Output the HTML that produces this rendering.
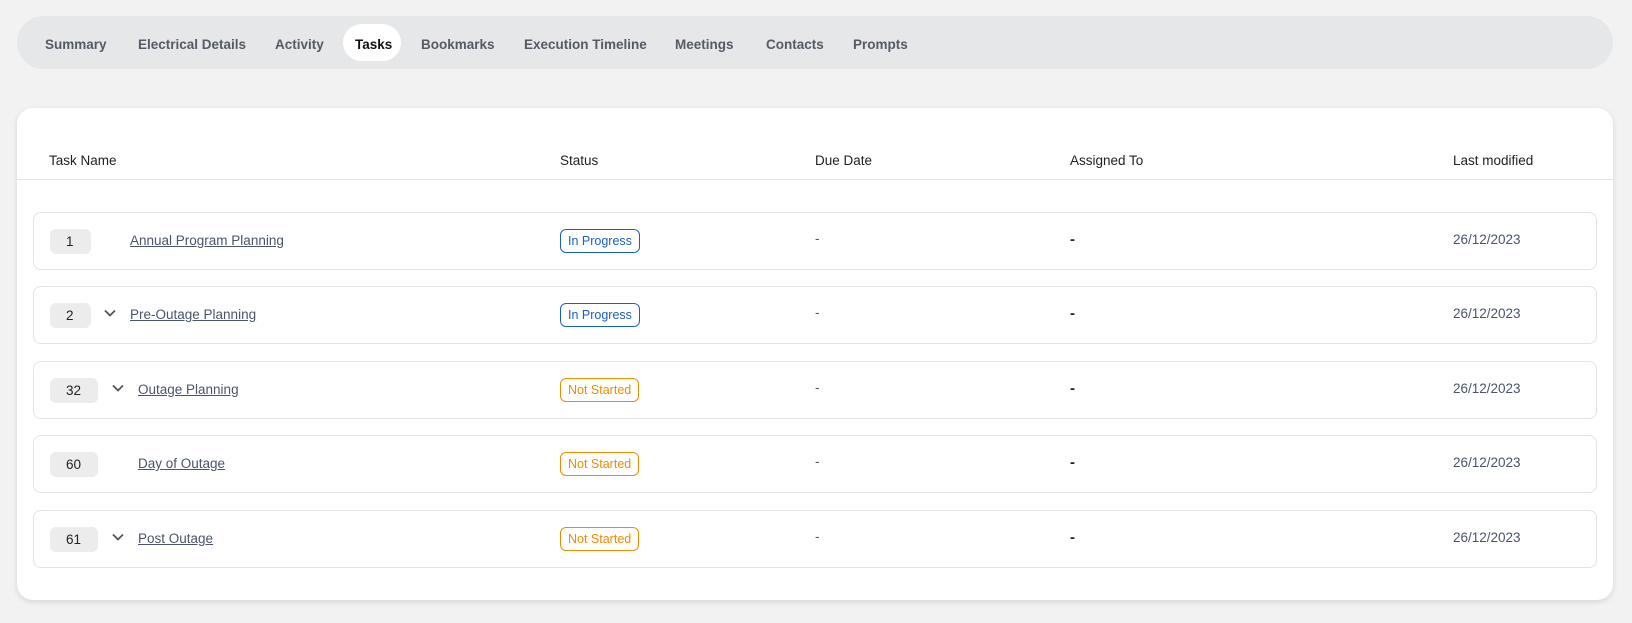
<!DOCTYPE html>
<html><head><meta charset="utf-8"><style>
*{box-sizing:border-box;margin:0;padding:0}
body{width:1632px;height:623px;background:#f2f2f2;font-family:"Liberation Sans",sans-serif;position:relative;overflow:hidden;color:#424b5a}
.tabs{position:absolute;left:17px;top:16px;width:1596px;height:53px;background:#e6e7e9;border-radius:27px}
.tab{position:absolute;top:2px;line-height:53px;font-size:13.5px;font-weight:bold;color:#545b66}
.pill{position:absolute;left:326px;top:8px;width:58px;height:37px;background:#fff;border-radius:19px}
.card{position:absolute;left:17px;top:108px;width:1596px;height:492px;background:#fff;border-radius:16px;box-shadow:0 2px 6px rgba(0,0,0,.12)}
.h{position:absolute;top:153px;font-size:13.5px;color:#222}
.div{position:absolute;left:17px;top:179px;width:1596px;height:1px;background:#e3e4e7}
.row{position:absolute;left:33px;width:1564px;height:58px;border:1px solid #e1e3e7;border-radius:8px}
.num{position:absolute;left:16px;top:16px;height:25px;background:#ececec;border-radius:6px;font-size:13.5px;line-height:25px;padding-left:16px;color:#222}
.name{position:absolute;top:20px;font-size:13.5px;text-decoration:underline;color:#4a5568}
.st{position:absolute;left:526px;top:16px;height:24px;border:1px solid;border-radius:6px;font-size:12.5px;line-height:22px;padding:0 7px}
.ip{color:#1a5fc8;border-color:#1a5fc8}
.ns{color:#f08a00;border-color:#f08a00}
.dash{position:absolute;left:781px;top:18px;font-size:13.5px;color:#555}
.ad{position:absolute;left:1036px;top:18px;font-size:15px;font-weight:bold;color:#222}
.dt{position:absolute;left:1419px;top:19px;font-size:13.5px;color:#4a5568}
.chev{position:absolute;top:22px}
</style></head><body>
<div class="tabs">
<div class="pill"></div>
<span class="tab" style="left:28px">Summary</span>
<span class="tab" style="left:121px">Electrical Details</span>
<span class="tab" style="left:258px">Activity</span>
<span class="tab" style="left:338px;color:#111">Tasks</span>
<span class="tab" style="left:404px">Bookmarks</span>
<span class="tab" style="left:507px">Execution Timeline</span>
<span class="tab" style="left:658px">Meetings</span>
<span class="tab" style="left:749px">Contacts</span>
<span class="tab" style="left:836px">Prompts</span>
</div>
<div class="card"></div>
<span class="h" style="left:49px">Task Name</span>
<span class="h" style="left:560px">Status</span>
<span class="h" style="left:815px">Due Date</span>
<span class="h" style="left:1070px">Assigned To</span>
<span class="h" style="left:1453px">Last modified</span>
<div class="div"></div>

<div class="row" style="top:212px"><div class="num" style="width:41px">1</div><span class="name" style="left:96px">Annual Program Planning</span><span class="st ip">In Progress</span><span class="dash">-</span><span class="ad">-</span><span class="dt">26/12/2023</span></div>
<div class="row" style="top:286px"><div class="num" style="width:41px">2</div><svg class="chev" style="left:70px" width="12" height="8" viewBox="0 0 12 8"><path d="M1 1.5l5 5 5-5" fill="none" stroke="#555" stroke-width="1.8"/></svg><span class="name" style="left:96px">Pre-Outage Planning</span><span class="st ip">In Progress</span><span class="dash">-</span><span class="ad">-</span><span class="dt">26/12/2023</span></div>
<div class="row" style="top:361px"><div class="num" style="width:48px">32</div><svg class="chev" style="left:78px" width="12" height="8" viewBox="0 0 12 8"><path d="M1 1.5l5 5 5-5" fill="none" stroke="#555" stroke-width="1.8"/></svg><span class="name" style="left:104px">Outage Planning</span><span class="st ns">Not Started</span><span class="dash">-</span><span class="ad">-</span><span class="dt">26/12/2023</span></div>
<div class="row" style="top:435px"><div class="num" style="width:48px">60</div><span class="name" style="left:104px">Day of Outage</span><span class="st ns">Not Started</span><span class="dash">-</span><span class="ad">-</span><span class="dt">26/12/2023</span></div>
<div class="row" style="top:510px"><div class="num" style="width:48px">61</div><svg class="chev" style="left:78px" width="12" height="8" viewBox="0 0 12 8"><path d="M1 1.5l5 5 5-5" fill="none" stroke="#555" stroke-width="1.8"/></svg><span class="name" style="left:104px">Post Outage</span><span class="st ns">Not Started</span><span class="dash">-</span><span class="ad">-</span><span class="dt">26/12/2023</span></div>
</body></html>
